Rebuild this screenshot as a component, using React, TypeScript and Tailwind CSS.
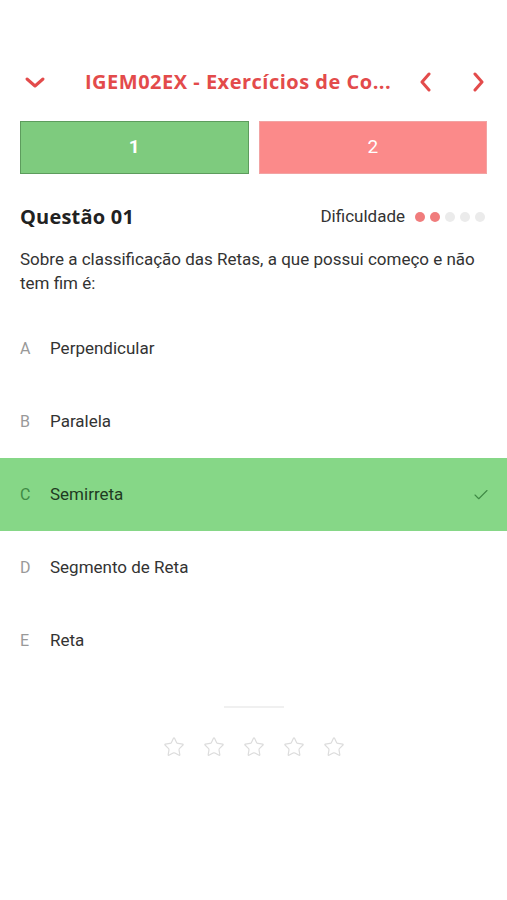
import { Check, Star } from "lucide-react";

const OPTIONS = [
  { letter: "A", text: "Perpendicular" },
  { letter: "B", text: "Paralela" },
  { letter: "C", text: "Semirreta", correct: true },
  { letter: "D", text: "Segmento de Reta" },
  { letter: "E", text: "Reta" },
];

function Chevron({ dir }: { dir: "down" | "left" | "right" }) {
  const d =
    dir === "down" ? "M3 3 L11 10 L19 3" : dir === "left" ? "M9 2 L2 10 L9 18" : "M2 2 L9 10 L2 18";
  const w = dir === "down" ? 22 : 11;
  const h = dir === "down" ? 13 : 20;
  return (
    <svg width={w} height={h} viewBox={`0 0 ${w} ${h}`} fill="none" stroke="#e34b4b" strokeWidth="3" strokeLinecap="round" strokeLinejoin="round">
      <path d={d} />
    </svg>
  );
}

export default function App() {
  return (
    <div className="w-[507px] h-[900px] overflow-hidden bg-white font-['Roboto',sans-serif] text-[#333]">
      {/* cabeçalho */}
      <div className="flex items-center h-[44px] mt-[60px] pl-[24px] pr-[23px]">
        <Chevron dir="down" />
        <div className="ml-[39px] whitespace-nowrap font-['Open_Sans',sans-serif] font-bold text-[20px] tracking-[0.5px] text-[#e34b4b] leading-none">
          IGEM02EX - Exercícios de Co...
        </div>
        <div className="ml-auto flex items-center gap-[42px]">
          <Chevron dir="left" />
          <Chevron dir="right" />
        </div>
      </div>

      {/* questões */}
      <div className="flex gap-[10px] px-[20px] mt-[17px]">
        <div className="flex-1 h-[53px] grid place-items-center bg-[#7ecb7e] border border-[#5d9c5d] text-white font-bold text-[19px]">
          1
        </div>
        <div className="flex-1 h-[53px] grid place-items-center bg-[#fb8a8a] border border-[#f2a3a3] text-white text-[19px]">
          2
        </div>
      </div>

      <div className="flex items-center justify-between pl-[20px] pr-[22px] mt-[28px]">
        <div className="font-['Open_Sans',sans-serif] font-bold text-[20px] tracking-[0.2px] text-[#222]">Questão 01</div>
        <div className="flex items-center gap-[10px]">
          <span className="text-[17px] text-[#333]">Dificuldade</span>
          <div className="flex items-center gap-[5px]">
            <span className="size-[10px] rounded-full bg-[#f07c7c]" />
            <span className="size-[10px] rounded-full bg-[#f07c7c]" />
            <span className="size-[10px] rounded-full bg-[#ebebeb]" />
            <span className="size-[10px] rounded-full bg-[#ebebeb]" />
            <span className="size-[10px] rounded-full bg-[#ebebeb]" />
          </div>
        </div>
      </div>

      <p className="px-[20px] mt-[15px] text-[17px] leading-[24px] text-[#333]">
        Sobre a classificação das Retas, a que possui começo e não tem fim é:
      </p>

      <div className="mt-[17px] flex flex-col">
        {OPTIONS.map((o) => (
          <div
            key={o.letter}
            className={`flex items-center h-[73px] px-[20px] ${o.correct ? "bg-[#86d787]" : ""}`}
          >
            <span className={`w-[30px] text-[16px] ${o.correct ? "text-[#3f8a45]" : "text-[#999]"}`}>{o.letter}</span>
            <span className={`text-[17px] ${o.correct ? "text-[#1f3a22]" : "text-[#333]"}`}>{o.text}</span>
            {o.correct && <Check className="ml-auto mr-[-3px] text-[#3f8a45]" size={18} strokeWidth={1.5} />}
          </div>
        ))}
      </div>

      <div className="mx-auto mt-[29px] w-[60px] h-[2px] bg-[#f0f0f0]" />

      <div className="flex justify-center gap-[18px] mt-[28px]">
        {[0, 1, 2, 3, 4].map((i) => (
          <Star key={i} size={22} strokeWidth={1.3} className="text-[#dcdcdc]" />
        ))}
      </div>
    </div>
  );
}
